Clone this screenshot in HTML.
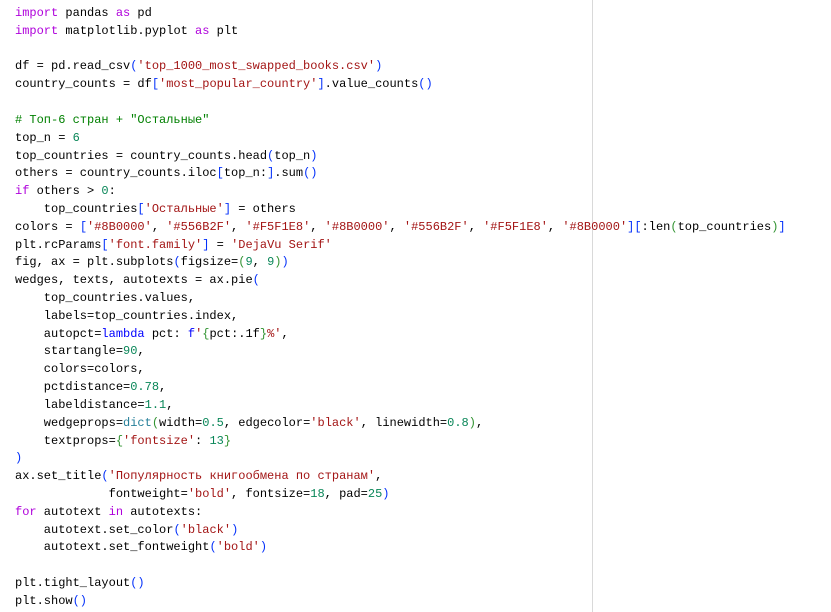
<!DOCTYPE html>
<html><head><meta charset="utf-8"><style>
body{margin:0;background:#fff;width:831px;height:612px;overflow:hidden;position:relative}
.v{position:absolute;left:592px;top:0;width:1px;height:612px;background:#d9d9d9}
pre{margin:0;position:absolute;left:15px;top:5px;font-family:"Liberation Mono","DejaVu Sans Mono",monospace;font-size:12px;line-height:17.82px;color:#000}
.k{color:#af00db}.b{color:#0000ff}.s{color:#a31515}.n{color:#098658}.c{color:#008000}.p1{color:#0431fa}.p2{color:#319331}.t{color:#267f99}
</style></head><body><div class="v"></div><pre><span class="k">import</span> pandas <span class="k">as</span> pd
<span class="k">import</span> matplotlib.pyplot <span class="k">as</span> plt

df = pd.read_csv<span class="p1">(</span><span class="s">'top_1000_most_swapped_books.csv'</span><span class="p1">)</span>
country_counts = df<span class="p1">[</span><span class="s">'most_popular_country'</span><span class="p1">]</span>.value_counts<span class="p1">()</span>

<span class="c"># Топ-6 стран + "Остальные"</span>
top_n = <span class="n">6</span>
top_countries = country_counts.head<span class="p1">(</span>top_n<span class="p1">)</span>
others = country_counts.iloc<span class="p1">[</span>top_n:<span class="p1">]</span>.sum<span class="p1">()</span>
<span class="k">if</span> others &gt; <span class="n">0</span>:
    top_countries<span class="p1">[</span><span class="s">'Остальные'</span><span class="p1">]</span> = others
colors = <span class="p1">[</span><span class="s">'#8B0000'</span>, <span class="s">'#556B2F'</span>, <span class="s">'#F5F1E8'</span>, <span class="s">'#8B0000'</span>, <span class="s">'#556B2F'</span>, <span class="s">'#F5F1E8'</span>, <span class="s">'#8B0000'</span><span class="p1">][</span>:len<span class="p2">(</span>top_countries<span class="p2">)</span><span class="p1">]</span>
plt.rcParams<span class="p1">[</span><span class="s">'font.family'</span><span class="p1">]</span> = <span class="s">'DejaVu Serif'</span>
fig, ax = plt.subplots<span class="p1">(</span>figsize=<span class="p2">(</span><span class="n">9</span>, <span class="n">9</span><span class="p2">)</span><span class="p1">)</span>
wedges, texts, autotexts = ax.pie<span class="p1">(</span>
    top_countries.values,
    labels=top_countries.index,
    autopct=<span class="b">lambda</span> pct: <span class="b">f</span><span class="s">'</span><span class="p2">{</span>pct:.1f<span class="p2">}</span><span class="s">%'</span>,
    startangle=<span class="n">90</span>,
    colors=colors,
    pctdistance=<span class="n">0.78</span>,
    labeldistance=<span class="n">1.1</span>,
    wedgeprops=<span class="t">dict</span><span class="p2">(</span>width=<span class="n">0.5</span>, edgecolor=<span class="s">'black'</span>, linewidth=<span class="n">0.8</span><span class="p2">)</span>,
    textprops=<span class="p2">{</span><span class="s">'fontsize'</span>: <span class="n">13</span><span class="p2">}</span>
<span class="p1">)</span>
ax.set_title<span class="p1">(</span><span class="s">'Популярность книгообмена по странам'</span>,
             fontweight=<span class="s">'bold'</span>, fontsize=<span class="n">18</span>, pad=<span class="n">25</span><span class="p1">)</span>
<span class="k">for</span> autotext <span class="k">in</span> autotexts:
    autotext.set_color<span class="p1">(</span><span class="s">'black'</span><span class="p1">)</span>
    autotext.set_fontweight<span class="p1">(</span><span class="s">'bold'</span><span class="p1">)</span>

plt.tight_layout<span class="p1">()</span>
plt.show<span class="p1">()</span></pre></body></html>
